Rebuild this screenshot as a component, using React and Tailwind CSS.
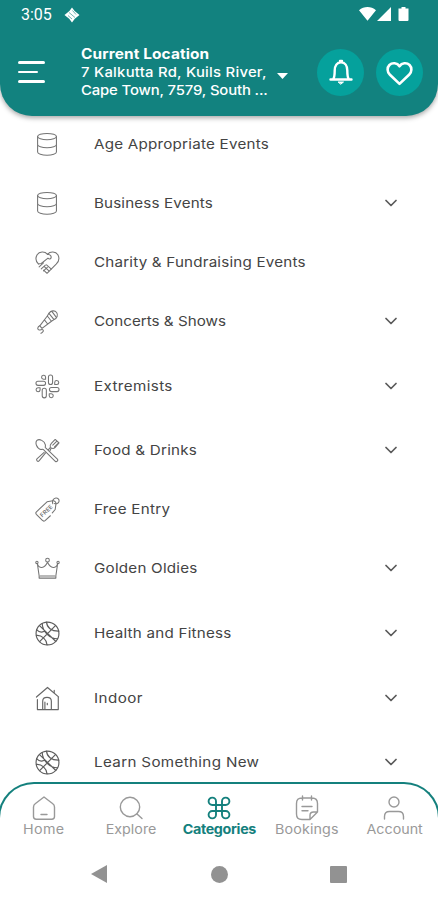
import { ChevronDown } from "lucide-react";

const Icon = ({ children, className = "h-[25px] w-[25px] text-[#747474]", strokeWidth = 1.1 }) => (
  <svg
    viewBox="0 0 26 26"
    className={className}
    fill="none"
    stroke="currentColor"
    strokeWidth={strokeWidth}
    strokeLinecap="round"
    strokeLinejoin="round"
  >
    {children}
  </svg>
);

const DatabaseIcon = () => (
  <Icon>
    <ellipse cx="12.5" cy="4.800" rx="9.8" ry="3.300" />
    <path d="M2.700 4.800v16c0 1.800 4.300 3.300 9.800 3.300s9.800-1.500 9.800-3.300v-16M2.700 13c0 1.800 4.300 3.300 9.800 3.300s9.800-1.500 9.800-3.300" />
  </Icon>
);

const CharityIcon = () => (
  <Icon>
    <path d="M13 4.500C10 1 4.500 1.500 2.200 5 .2 8.500 1 12 3.500 14.500M13 4.500C16 1 21.500 1.500 23.800 5c2 3.500.9 7-1.800 9.800L12.500 24.200 9 21" />
    <path d="M13 4.500c2.500.3 4 1.800 3.800 3.500-.3 1.500-2 1.700-3.300.5L6.500 14l-3 .5" />
    <path d="M4.300 17.500l4.500-4.200M6.500 19.700l4.300-4M8.800 21.800l4-3.700M12 15.400l5 4.400M10 17.500l4.500 4.300" />
  </Icon>
);

const MicrophoneIcon = () => (
  <Icon>
    <path d="M14.500 4.500c2-3 6-3.500 8-.8 1.800 2.500.5 6-2.700 7.300z" />
    <path d="m14.500 4.500-1.700 2.800 4.300 5.400 2.700-1.700M12.800 7.300 5 17.500l2.300 2.600 9.800-7.400M10 11.500l3 3.800M17.500 2.500l4.500 6" />
    <path d="M5 17.500c-2.500 1-2.800 4-.8 4.300 1.800.2 3.300-1.200 4.200 0 .8 1.200-.6 2.600-2.200 3.500" />
  </Icon>
);

const ExtremeIcon = () => (
  <Icon>
    <rect x="1" y="7.500" width="10" height="4.300" rx="2.100" />
    <rect x="14" y="1" width="4.300" height="10" rx="2.100" />
    <rect x="15" y="14" width="10" height="4.300" rx="2.100" />
    <rect x="7.500" y="14.800" width="4.300" height="10" rx="2.100" />
    <path d="M11 5.500H8.900A2.100 2.100 0 1 1 11 3.200zM20.500 11V8.800a2.100 2.100 0 1 1 2.200 2.200zM14.800 20.500H17a2.100 2.100 0 1 1-2.200 2.200zM5.300 14.300v2.200a2.100 2.100 0 1 1-2.200-2.200z" />
  </Icon>
);

const FoodIcon = () => (
  <Icon>
    <path d="M2 2.500C4.500.5 10 2.800 10.800 7.200c.2 1.400-.3 2.300 0 2.800L23.300 22c1.200 1.400-.8 3.400-2.200 2.200L8.800 12c-.6-.5-1.500 0-2.800-.1C2 11.200-.3 5 2 2.500z" />
    <path d="m14 12 2-2.200c-.8-2 0-3.300 1-4.300L21 1.500M18.500 7.500l4-4M20.300 9.200l4-4M21 1.500l4 3.700M25 5.200 20.800 10c-1 1-2.800 1-4 .5l-1.300 3M11 15.500 4.200 23.800c-1.400 1.300-3.300-.8-2.200-2.100L9.500 15" />
  </Icon>
);

const FreeTagIcon = () => (
  <Icon>
    <path d="m16 19.500-5.500 5c-1 .8-2 .7-2.800-.1L1.400 18c-.7-.8-.7-1.800.1-2.600L12.500 5l6-1c1.900-.2 3.500 1.300 3.300 3.200l-.8 5.800-3 3.500" />
    <path d="M18.500 7c-1-2.500.5-5.700 3.200-6 2-.2 3.700 1.500 3.300 3.500-.4 2.200-3 3.200-4.700 2.200" />
    <text
      x="12"
      y="16.500"
      transform="rotate(-43 12 14.500)"
      textAnchor="middle"
      fill="currentColor"
      stroke="none"
      className="font-['Inter'] text-[6px] font-semibold"
    >
      FREE
    </text>
  </Icon>
);

const CrownIcon = () => (
  <Icon>
    <path d="M4.300 20.500 2.500 8.200c1.800 4.800 7 5.600 10.500-1.700 3.500 7.300 8.700 6.500 10.500 1.700L21.700 20.500M4.300 23h17.400M4.300 20.500V23M21.700 20.500V23M5.500 20.700h15" />
    <circle cx="13" cy="4.300" r="1.900" />
    <circle cx="2" cy="6.700" r="1.200" />
    <circle cx="24" cy="6.700" r="1.200" />
  </Icon>
);

const BallIcon = () => (
  <Icon className="h-[25px] w-[25px] text-[#5c5c5c]" strokeWidth={1.2}>
    <circle cx="13" cy="13" r="11.900" />
    <path d="m4.700 4.800 17 16.500M21.500 4.500 4.800 21.500M12 1.200c.3 5.500 5 9.500 12.800 9.300M1.500 15c5.500-.5 10.500 4 11 9.700M7.500 2.700c.2 8 7.500 16 16 15.800M1.700 9c2.500 2.800 5 3 7.500 2" />
  </Icon>
);

const IndoorIcon = () => (
  <Icon className="h-[25px] w-[25px] text-[#666666]" strokeWidth={1.2}>
    <path d="M1.500 11.500 13 1.500l11.500 9.800M24.200 11.300v13.200H2.500V14M20 4.500v3M8 24.300v-8.500c0-5.200 9-5.200 9 0v8.500M10.300 24.300v-7.500M12.800 18v1.500" />
  </Icon>
);

const categories = [
  { label: "Age Appropriate Events", icon: DatabaseIcon, row: "tracking-[0.2px]" },
  { label: "Business Events", icon: DatabaseIcon, row: "tracking-[0.13px]", expandable: true },
  { label: "Charity & Fundraising Events", icon: CharityIcon, row: "tracking-[0.17px]" },
  { label: "Concerts & Shows", icon: MicrophoneIcon, row: "tracking-[0.01px]", expandable: true },
  { label: "Extremists", icon: ExtremeIcon, row: "mt-1.5 tracking-[0.35px]", expandable: true },
  { label: "Food & Drinks", icon: FoodIcon, row: "mt-[5px] tracking-[0.2px]", expandable: true },
  { label: "Free Entry", icon: FreeTagIcon, row: "tracking-[0.25px]" },
  { label: "Golden Oldies", icon: CrownIcon, row: "tracking-[0.2px]", expandable: true },
  { label: "Health and Fitness", icon: BallIcon, row: "mt-1.5 tracking-[0.2px]", expandable: true },
  { label: "Indoor", icon: IndoorIcon, row: "mt-1.5 tracking-[0.4px]", expandable: true },
  { label: "Learn Something New", icon: BallIcon, row: "mt-[5px] tracking-[0.3px]", expandable: true },
];

const tabs = [
  {
    label: "Home",
    style: "text-[#999999] tracking-[0.3px]",
    icon: <path d="M4.500 8.500 13 2l8.500 6.500c1.500 1.100 2 2 2 3.500v9.500c0 1.700-1 2.700-2.700 2.700H5.200c-1.700 0-2.700-1-2.700-2.700V12c0-1.500.5-2.400 2-3.500zM10 19.500h6" />,
  },
  {
    label: "Explore",
    style: "text-[#999999]",
    icon: (
      <>
        <circle cx="12" cy="12" r="9.700" />
        <path d="m19 19 5 4.500" />
      </>
    ),
  },
  {
    label: "Categories",
    style: "text-[#14807d] font-bold tracking-[-0.3px]",
    icon: (
      <path
        strokeWidth="1.900"
        d="M10 10H6.300a3.700 3.700 0 1 1 3.700-3.700v13.400a3.700 3.700 0 1 1-3.700-3.700h13.400a3.700 3.700 0 1 1-3.700 3.700V6.300a3.700 3.700 0 1 1 3.700 3.700z"
      />
    ),
  },
  {
    label: "Bookings",
    style: "text-[#999999] tracking-[0.1px]",
    icon: (
      <path d="M16 24.500H8c-3.700 0-5.500-1.800-5.500-5.500V8.500C2.500 4.800 4.300 3 8 3h10c3.700 0 5.500 1.800 5.500 5.500V17L16 24.500v-4c0-2.300 1-3.500 3.500-3.500h4M8.500 1v4M17.500 1v4M8 11.500h10M8 15.800h6" />
    ),
  },
  {
    label: "Account",
    style: "text-[#999999]",
    icon: (
      <>
        <circle cx="13" cy="7" r="5" />
        <path d="M3.500 24v-2.500c0-3.500 2-5 5-5h9c3 0 5 1.500 5 5V24" />
      </>
    ),
  },
];

const StatusBar = () => (
  <div className="flex h-[30px] items-center justify-between pl-[21px] pr-[29px]">
    <div className="flex items-center gap-3">
      <span className="font-['Roboto'] text-base leading-none">3:05</span>
      <svg viewBox="0 0 16 16" className="h-4 w-4" fill="currentColor">
        <path d="M8 .5l2.600 3.600L15.500 8l-4.700 3.800L8 15.500l-2.800-3.700L.5 8l4.900-3.900z" />
        <path d="m5 5.500 6 5M8.500 3.500l3.500 4M4 8.500l4 3.500" stroke="#12827f" strokeWidth=".6" />
      </svg>
    </div>
    <svg viewBox="0 0 50 16" className="-mt-0.5 h-4 w-[50px]" fill="currentColor">
      <path d="M0 4.200C5-.2 12-.2 17 4.200L8.500 14.800zM32 1v14H18zM39.500 2.500h3V1h4v1.500H49.500V14q0 1-1 1h-8q-1 0-1-1z" />
    </svg>
  </div>
);

const Header = () => (
  <header className="relative z-10 h-[116px] shrink-0 rounded-b-[32px] bg-[#12827f] text-white shadow-[0_2px_5px_rgba(0,0,0,0.35)]">
    <StatusBar />
    <div className="flex h-[84px] items-center pl-[18px] pr-[15px]">
      <button className="flex w-[27px] flex-col gap-[7px]">
        <span className="h-[2.500px] w-full rounded-full bg-white" />
        <span className="h-[2.500px] w-5 rounded-full bg-white" />
        <span className="h-[2.500px] w-full rounded-full bg-white" />
      </button>
      <div className="ml-9 w-[196px] origin-left scale-x-110 whitespace-nowrap text-[13.5px] font-medium leading-[18px]">
        <p className="text-sm font-bold leading-[18px] tracking-[0.1px]">Current Location</p>
        <p className="tracking-[0.23px]">7 Kalkutta Rd, Kuils River,</p>
        <p className="tracking-[-0.12px]">Cape Town, 7579, South ...</p>
      </div>
      <svg viewBox="0 0 11 6" className="mt-2 h-1.5 w-[11px]" fill="currentColor">
        <path d="M0 0h11L5.500 6z" />
      </svg>
      <button className="ml-auto flex h-[47px] w-[47px] items-center justify-center rounded-full bg-[#05a19c]">
        <Icon className="h-[26px] w-[26px]" strokeWidth={2.4}>
          <path d="M2.500 20.500h21M5 20.500c1.500-1.800 1.700-4 1.700-9 0-4.800 2.300-8.200 6.300-8.200s6.300 3.400 6.300 8.200c0 5 .2 7.200 1.700 9M12 2h2" />
          <path d="M10.500 23h5L13 25z" fill="currentColor" strokeWidth="1" />
        </Icon>
      </button>
      <button className="ml-3 flex h-[47px] w-[47px] items-center justify-center rounded-full bg-[#05a19c]">
        <Icon className="h-[27px] w-[27px]" strokeWidth={2.5}>
          <path d="M13 24 3.800 15.200c-3-3-2.800-7 -.5-9.400C6 3.200 10.800 3.500 13 7c2.200-3.500 7-3.800 9.700-1.200 2.300 2.400 2.500 6.400-.5 9.400z" />
        </Icon>
      </button>
    </div>
  </header>
);

const CategoryRow = ({ label, icon: CategoryIcon, row, expandable }) => (
  <li className={`flex h-[59px] items-center pl-[35px] pr-[37px] ${row}`}>
    <CategoryIcon />
    <span className="ml-[34px] flex-1 origin-left scale-x-[1.125] whitespace-nowrap pt-px text-[13.5px] text-[#444444]">
      {label}
    </span>
    {expandable && <ChevronDown className="h-5 w-5 text-[#5a5a5a]" strokeWidth={2.1} />}
  </li>
);

const BottomNav = () => (
  <nav className="-mx-[2px] h-[118px] shrink-0 rounded-t-[36px] border-x-2 border-t-2 border-[#14807d] bg-white">
    <div className="grid grid-cols-5 pt-[11px]">
      {tabs.map((tab) => (
        <button
          key={tab.label}
          className={`flex flex-col items-center whitespace-nowrap text-[13px] leading-[17px] ${tab.style}`}
        >
          <Icon className="h-[26px] w-[26px]" strokeWidth={1.4}>
            {tab.icon}
          </Icon>
          <span className="scale-x-110">{tab.label}</span>
        </button>
      ))}
    </div>
    <div className="mt-[27px] flex h-[18px] items-center pl-[91px] text-[#929292]">
      <svg viewBox="0 0 16 18" className="h-[18px] w-4" fill="currentColor">
        <path d="M0 9 16 0v18z" />
      </svg>
      <span className="ml-[104px] h-[17px] w-[17px] rounded-full bg-current" />
      <span className="ml-[102px] h-[17px] w-[17px] rounded-[1px] bg-current" />
    </div>
  </nav>
);

const App = () => (
  <div className="flex h-[900px] w-full flex-col overflow-hidden bg-white font-['Inter',sans-serif]">
    <Header />
    <main className="min-h-0 flex-1 overflow-hidden">
      <ul className="-mt-[1.500px]">
        {categories.map((category) => (
          <CategoryRow key={category.label} {...category} />
        ))}
      </ul>
    </main>
    <BottomNav />
  </div>
);

export default App;
